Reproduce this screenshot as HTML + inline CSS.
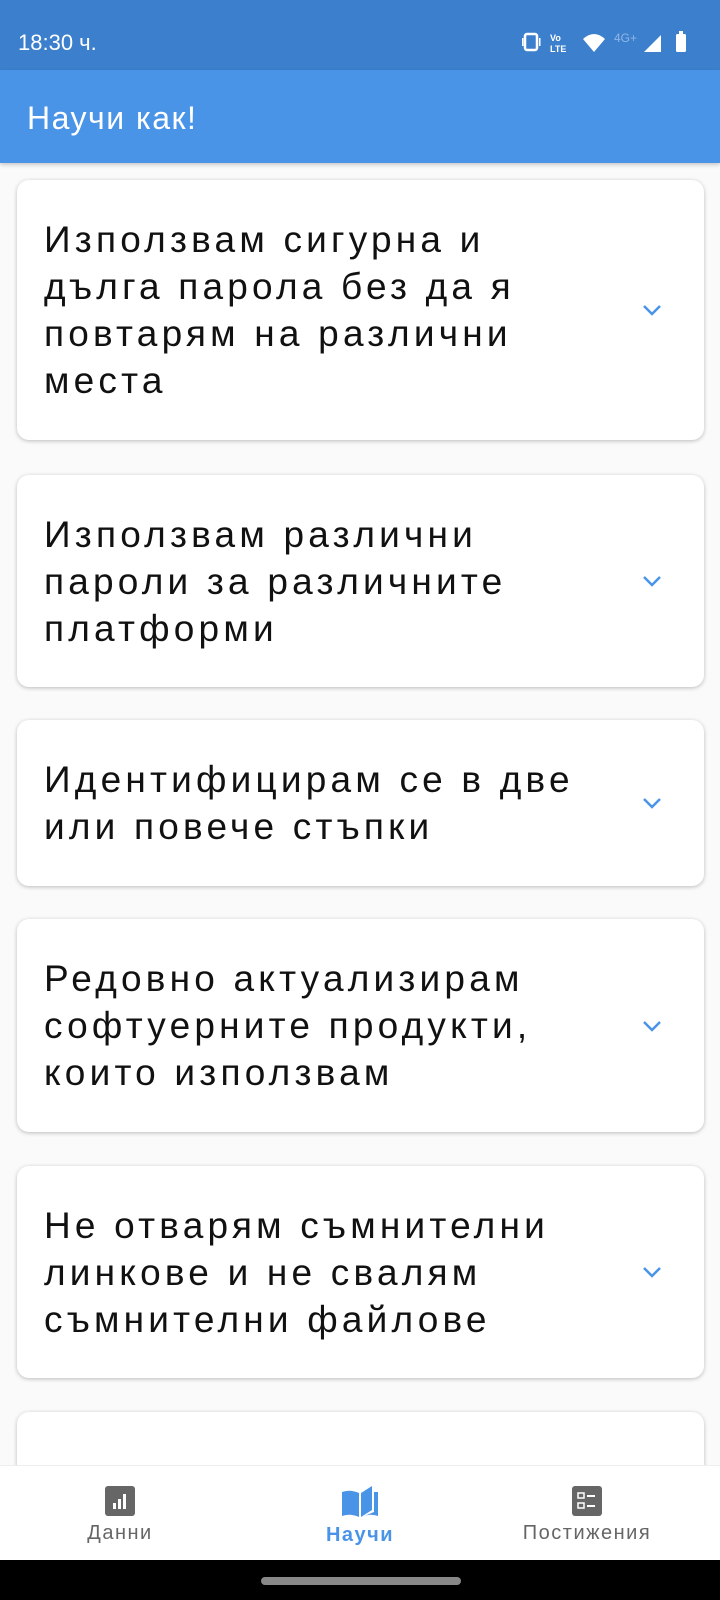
<!DOCTYPE html>
<html><head><meta charset="utf-8"><style>
*{margin:0;padding:0;box-sizing:border-box}
body{width:720px;height:1600px;background:#fafafa;font-family:"Liberation Sans",sans-serif;position:relative;overflow:hidden}
.sb{position:absolute;top:0;left:0;width:720px;height:70px;background:#3c7fcc;color:#fff}
.ab{position:absolute;top:70px;left:0;width:720px;height:93px;background:#4a94e8;color:#fff;font-size:32px;padding:30px 0 0 27px;letter-spacing:1.5px;box-shadow:0 2px 4px rgba(0,0,0,.2)}
.card{position:absolute;left:17px;width:687px;background:#fff;border-radius:12px;box-shadow:0 1px 4px rgba(0,0,0,.25);display:flex;align-items:center;padding:0 60px 0 27px}
.card p{font-size:37px;line-height:47px;color:#111;letter-spacing:4.2px;flex:1;white-space:nowrap}
.chev{position:absolute;right:42px;top:50%;margin-top:-6px}
.nav{position:absolute;top:1465px;left:0;width:720px;height:95px;background:#fff;border-top:1px solid #eee}
.nav div{position:absolute;top:0;width:240px;text-align:center;font-size:20px;color:#666;letter-spacing:1.5px}
.nav svg{display:block;margin:20px auto 6px}
.bot{position:absolute;top:1560px;left:0;width:720px;height:40px;background:#000}
.bot i{position:absolute;left:261px;top:17px;width:200px;height:8px;border-radius:4px;background:#888}
</style></head><body>
<div class="sb"><span style="position:absolute;left:18px;top:30px;font-size:22px">18:30 ч.</span>
<svg style="position:absolute;left:522px;top:30px" width="180" height="24" viewBox="0 0 180 24" fill="#fff">
<rect x="3" y="4" width="12" height="16" rx="2" fill="none" stroke="#fff" stroke-width="2.5"/><rect x="0" y="8" width="1.5" height="8"/><rect x="17" y="8" width="1.5" height="8"/>
<text x="28" y="11" font-size="9" font-family="Liberation Sans" font-weight="bold">Vo</text><text x="28" y="22" font-size="9" font-family="Liberation Sans" font-weight="bold">LTE</text>
<path d="M61 9 Q72 -1 83 9 L72 22 Z"/><text x="92" y="12" font-size="12" fill="#8fb6e6" font-family="Liberation Sans">4G+</text>
<path d="M122 22 L139 5 L139 22 Z"/><rect x="154" y="4" width="10" height="18" rx="1.5"/><rect x="157" y="1" width="4" height="3"/></svg></div>
<div class="ab">Научи как!</div>

<div class="card" style="top:180px;height:260px"><p>Използвам сигурна и<br>дълга парола без да я<br>повтарям на различни<br>места</p><svg class="chev" width="20" height="12"><path d="M2 2 L10 10 L18 2" fill="none" stroke="#4a94e8" stroke-width="2.5"/></svg></div>
<div class="card" style="top:475px;height:212px"><p>Използвам различни<br>пароли за различните<br>платформи</p><svg class="chev" width="20" height="12"><path d="M2 2 L10 10 L18 2" fill="none" stroke="#4a94e8" stroke-width="2.5"/></svg></div>
<div class="card" style="top:720px;height:166px"><p>Идентифицирам се в две<br>или повече стъпки</p><svg class="chev" width="20" height="12"><path d="M2 2 L10 10 L18 2" fill="none" stroke="#4a94e8" stroke-width="2.5"/></svg></div>
<div class="card" style="top:919px;height:213px"><p>Редовно актуализирам<br>софтуерните продукти,<br>които използвам</p><svg class="chev" width="20" height="12"><path d="M2 2 L10 10 L18 2" fill="none" stroke="#4a94e8" stroke-width="2.5"/></svg></div>
<div class="card" style="top:1166px;height:212px"><p>Не отварям съмнителни<br>линкове и не свалям<br>съмнителни файлове</p><svg class="chev" width="20" height="12"><path d="M2 2 L10 10 L18 2" fill="none" stroke="#4a94e8" stroke-width="2.5"/></svg></div>
<div class="card" style="top:1412px;height:150px"></div>

<div class="nav">
<div style="left:0"><svg width="30" height="30"><rect width="30" height="30" rx="3" fill="#666"/><rect x="8" y="17" width="3" height="6" fill="#fff"/><rect x="13" y="13" width="3" height="10" fill="#fff"/><rect x="18" y="8" width="3" height="15" fill="#fff"/></svg>Данни</div>
<div style="left:240px;color:#4a94e8;font-weight:bold"><svg width="38" height="32" viewBox="0 0 38 32"><path d="M1 6 Q9 3 18 7 L18 31 Q9 27 1 30 Z" fill="#4a94e8"/><path d="M20 7 L31 0 L31 24 L20 31 Z" fill="#4a94e8"/><path d="M33 6 L37 6 L37 30 Q29 27 21 31 L33 26 Z" fill="#4a94e8"/></svg>Научи</div>
<div style="left:467px"><svg width="30" height="30"><rect width="30" height="30" rx="3" fill="#666"/><rect x="6" y="7" width="6" height="5" fill="none" stroke="#fff" stroke-width="1.5"/><rect x="6" y="17" width="6" height="5" fill="none" stroke="#fff" stroke-width="1.5"/><rect x="15" y="9" width="8" height="2" fill="#fff"/><rect x="15" y="19" width="8" height="2" fill="#fff"/></svg>Постижения</div>
</div>
<div class="bot"><i></i></div>
</body></html>
